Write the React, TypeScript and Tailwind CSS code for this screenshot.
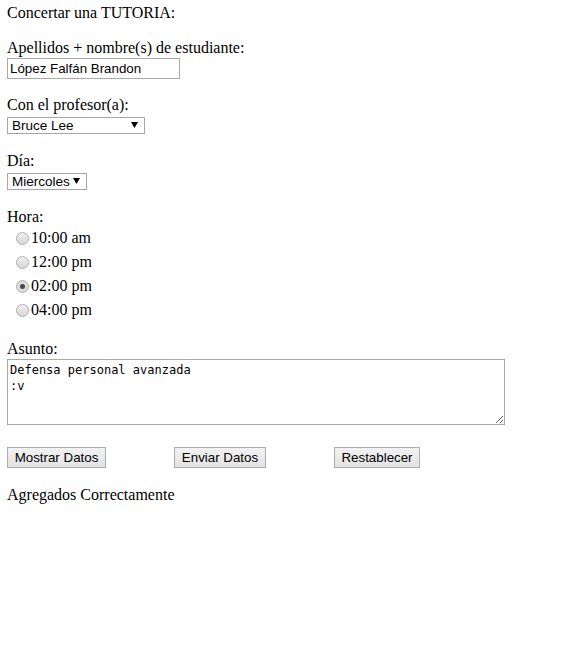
import React from "react";

const serif = "font-['Liberation_Serif','Times_New_Roman',serif]";
const sans = "font-['Liberation_Sans',Arial,sans-serif]";

function Arrow() {
  return (
    <svg width="7" height="6" viewBox="0 0 7 6" className="pointer-events-none absolute right-[7px] top-[5px]">
      <path d="M0 0 H7 L3.5 6 Z" fill="#000" />
    </svg>
  );
}

function Select({ width, value, options }: { width: string; value: string; options: string[] }) {
  return (
    <div className={`relative ${width} h-[17px]`}>
      <select
        defaultValue={value}
        className={`${sans} block appearance-none w-full h-full border border-[#a6a6a6] bg-white pl-[4px] text-[13.5px] leading-[15px] text-black outline-none rounded-none`}
      >
        {options.map((o) => (
          <option key={o}>{o}</option>
        ))}
      </select>
      <Arrow />
    </div>
  );
}

const times = ["10:00 am", "12:00 pm", "02:00 pm", "04:00 pm"];

export default function App() {
  return (
    <div className={`${serif} min-h-[657px] w-[565px] bg-white text-black text-[16px] pl-[7px] pt-[4px] flex flex-col items-start`}>
      <div className="h-[18px] leading-[18px]">Concertar una TUTORIA:</div>

      <div className="mt-[17px] h-[18px] leading-[18px]">Apellidos + nombre(s) de estudiante:</div>
      <input
        defaultValue="López Falfán Brandon"
        className={`${sans} mt-[1px] w-[173px] h-[21px] border border-[#a9a9a9] px-[2px] text-[13.33px] text-black outline-none`}
      />

      <div className="mt-[17px] h-[18px] leading-[18px]">Con el profesor(a):</div>
      <div className="mt-[3px]">
        <Select width="w-[138px]" value="Bruce Lee" options={["Bruce Lee"]} />
      </div>

      <div className="mt-[18px] h-[18px] leading-[18px]">Día:</div>
      <div className="mt-[3px]">
        <Select width="w-[80px]" value="Miercoles" options={["Miercoles"]} />
      </div>

      <div className="mt-[18px] h-[18px] leading-[18px]">Hora:</div>
      <div className="flex flex-col">
        {times.map((t, i) => (
          <label key={t} className="flex h-[24px] items-center pl-[9px]">
            <input
              type="radio"
              name="hora"
              defaultChecked={i === 2}
              className="appearance-none m-0 w-[13px] h-[13px] rounded-full border border-[#b0b0b0] bg-[linear-gradient(#f0f0f0,#d6d6d6)] checked:bg-[radial-gradient(circle,#4a4a4a_0,#4a4a4a_2px,#d8d8d8_3px,#e6e6e6_100%)]"
            />
            <span className="ml-[2px] leading-[18px]">{t}</span>
          </label>
        ))}
      </div>

      <div className="mt-[18px] h-[18px] leading-[18px]">Asunto:</div>
      <textarea
        defaultValue={"Defensa personal avanzada\n:v"}
        className="mt-[1px] w-[498px] h-[66px] border border-[#a9a9a9] p-[2px] font-['DejaVu_Sans_Mono',monospace] text-[12px] leading-[16px] text-black outline-none resize"
      />

      <div className="mt-[22px] flex">
        <button className={`${sans} h-[21px] w-[99px] border border-[#adadad] bg-[linear-gradient(#f2f2f2,#e3e3e3)] text-[13.33px] leading-[19px] text-black`}>
          Mostrar Datos
        </button>
        <button className={`${sans} ml-[68px] h-[21px] w-[92px] border border-[#adadad] bg-[linear-gradient(#f2f2f2,#e3e3e3)] text-[13.33px] leading-[19px] text-black`}>
          Enviar Datos
        </button>
        <button className={`${sans} ml-[68px] h-[21px] w-[86px] border border-[#adadad] bg-[linear-gradient(#f2f2f2,#e3e3e3)] text-[13.33px] leading-[19px] text-black`}>
          Restablecer
        </button>
      </div>

      <div className="mt-[18px] h-[18px] leading-[18px]">Agregados Correctamente</div>
    </div>
  );
}
